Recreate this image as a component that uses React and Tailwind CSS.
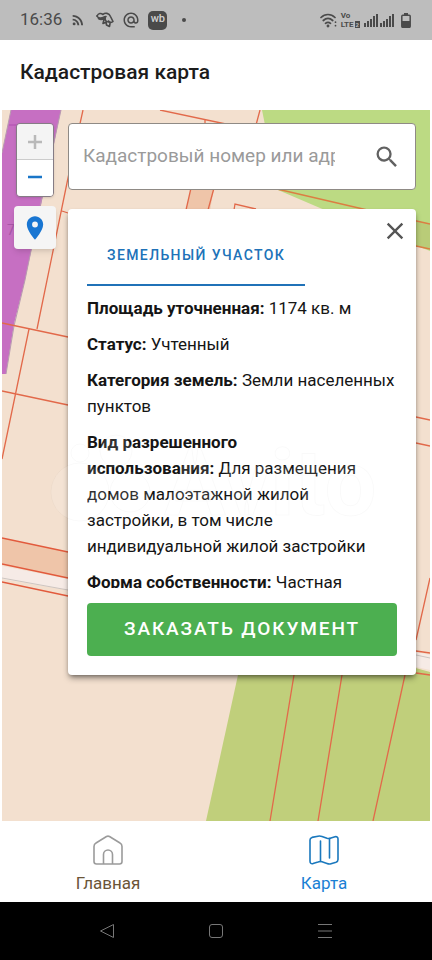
import { MdSearch, MdLocationOn, MdClose, MdRssFeed, MdAlternateEmail } from "react-icons/md";

const details = [
    { label: "Площадь уточненная:", value: "1174 кв. м" },
    { label: "Статус:", value: "Учтенный" },
    { label: "Категория земель:", value: "Земли населенных пунктов" },
    {
        label: "Вид разрешенного\nиспользования:",
        value: "Для размещения домов малоэтажной жилой застройки, в том числе индивидуальной жилой застройки",
    },
    { label: "Форма собственности:", value: "Частная" },
];

function SignalBars() {
    return (
        <svg viewBox="0 0 14 13" className="h-[13px] w-3.5" fill="currentColor" aria-hidden="true">
            <rect x="0" y="9" width="2" height="4" />
            <rect x="3" y="7" width="2" height="6" />
            <rect x="6" y="5" width="2" height="8" />
            <rect x="9" y="2" width="2" height="11" />
            <rect x="12" y="0" width="2" height="13" />
        </svg>
    );
}

function StatusBar() {
    return (
        <div className="flex h-10 items-center justify-between bg-[#bdbdbd] pl-5 pr-[21px] text-[#4a4a4a]">
            <div className="flex items-center">
                <span className="text-[17px]">16:36</span>
                <MdRssFeed className="ml-2 size-4" />
                {/* bird */}
                <svg viewBox="0 0 18 16" className="ml-2.5 h-4 w-[18px]" fill="none" stroke="currentColor" strokeWidth="1.6" strokeLinecap="round" strokeLinejoin="round" aria-hidden="true">
                    <path d="M1 4C2.500 1 5 1 7 2.500 9 .5 13 .8 14.500 4.500L17 9.500C15.500 11 13.500 10.500 12.500 9" />
                    <path d="M1 4c1 2 3 2.500 5 1.800 1-.3 2-1.300 4-1.300M2.500 6.500c2 1.500 4 1 6 0M9.500 5c-1 3 .5 5 3 5M8 7.500 7 11.500l2.500-1M10 10l.5 3 3 1.500.5-3" />
                </svg>
                <MdAlternateEmail className="ml-2 size-[18px]" />
                <span className="ml-2 flex h-[19px] w-[19px] items-center justify-center rounded-[5px] bg-[#4a4a4a] pb-px text-[11px] font-medium text-[#d0d0d0]">wb</span>
                <span className="ml-[15px] size-1 rounded-full bg-[#4a4a4a]" />
            </div>
            <div className="flex items-center">
                <svg viewBox="0 0 18 15" className="h-[15px] w-[18px]" fill="none" stroke="currentColor" strokeWidth="1.7" strokeLinecap="round" aria-hidden="true">
                    <path d="M1 4.500C5 .5 11 .5 15 4.500M3.300 7.500c3-2.600 6.400-2.600 9.400 0M5.500 10.300c1.600-1.300 3.400-1.300 5 0" />
                    <circle cx="8" cy="13" r=".6" fill="currentColor" />
                    <path d="M15.500 9v.2M15.500 12.500v.2" />
                </svg>
                <span className="ml-[3px] flex flex-col text-[8px] font-bold leading-[9px]">
                    <span>Vo</span>
                    <span className="flex items-center">
                        LTE<span className="ml-px bg-[#4a4a4a] px-px text-[6px] leading-[7px] text-[#bdbdbd]">2</span>
                    </span>
                </span>
                <span className="ml-1 flex gap-0.5">
                    <SignalBars />
                    <SignalBars />
                </span>
                <svg viewBox="0 0 10 15" className="ml-[7px] h-[15px] w-2.5" fill="none" stroke="currentColor" aria-hidden="true">
                    <path d="M3 0h4v2H3z" fill="currentColor" stroke="none" />
                    <rect x=".8" y="2.300" width="8.400" height="12" rx="1" strokeWidth="1.500" />
                    <path d="M1 8h8v6H1z" fill="currentColor" stroke="none" />
                </svg>
            </div>
        </div>
    );
}

// Parcels layer: one unit is one pixel at the base width
function ParcelMap() {
    return (
        <svg viewBox="2 110 428 711" preserveAspectRatio="xMidYMid slice" className="col-start-1 row-start-1 h-full w-full" aria-hidden="true">
            <rect x="2" y="110" width="428" height="711" fill="#f3e0cf" />
            {/* zones */}
            <path d="M2 110H61L43 196 25 280 14 324 6 374H2z" fill="#c66fc2" />
            <path d="M2 110h9L2 153z" fill="#f3e0cf" />
            <path d="M11 110 2 153M61 110 42 197 25 280 14 326 6 374" fill="none" stroke="#b79bb0" />
            <path d="M9 125h8" stroke="#b04fb0" />
            <text x="7" y="235" fontSize="14" fill="#a856a8">7</text>
            <path d="M262 110H430V251L320 208 278 190z" fill="#bcda83" />
            <path d="M416 221 430 224V249L416 246z" fill="#b9cc78" />
            <path d="M238 675 250 622 430 672V821H206z" fill="#c0cf7b" />
            <path d="M191 188h23l-4 22h-24zM2 538l66 14v26L2 564z" fill="#efc5a9" />
            <path d="M2 566 68 579 430 655V670L68 590 2 579z" fill="#f6ebe6" />
            <path d="M2 578 68 590M416 655l14 3" stroke="#cdc5c0" fill="none" />
            {/* parcel borders */}
            <g fill="none" stroke="#e2694a" strokeWidth="1.300">
                <path d="M83 110 68 178 37 329M62 211l6 2" />
                <path d="M2 323 68 337M29 329 2 459M2 391 68 405" />
                <path d="M2 538 68 552M2 564 68 578M2 582 68 596" stroke="#e25a3c" />
                <path d="M160 110 240 127M205 119v5M260 110 256 125" />
                <path d="M191 188 186 210M214 188 208 210M234 210l1-6 21 5" />
                <path d="M277 189 363 209 430 224M416 246l14 3" stroke="#dc7d42" />
                <path d="M416 417l14 3M416 443l14 3" />
                <path d="M430 578 416 640M416 651l14 2M416 673l14 2" />
                <path d="M294 675 270 821M342 675 318 821M405 675 373 821" />
            </g>
        </svg>
    );
}

function Watermark() {
    return (
        <svg viewBox="2 110 428 711" preserveAspectRatio="xMidYMid slice" className="pointer-events-none absolute inset-0 h-full w-full" fill="#ffffff" fillOpacity=".12" stroke="#000000" strokeOpacity=".025" aria-hidden="true">
            <circle cx="80" cy="453" r="9" />
            <circle cx="116" cy="451" r="16" />
            <circle cx="80" cy="492" r="29" />
            <circle cx="130" cy="492" r="20" />
            <text x="164" y="515" fontSize="92" fontWeight="700">Avito</text>
        </svg>
    );
}

function MapControls() {
    return (
        <div className="flex w-[42px] shrink-0 flex-col items-center gap-[9px]">
            <div className="flex w-[38px] flex-col overflow-hidden rounded-sm border border-[#857c85] shadow">
                <button type="button" aria-label="+" className="flex h-9 items-center justify-center border-b border-[#ccc] bg-[#f4f4f4] text-[#b9b9b9]">
                    <svg viewBox="0 0 14 14" className="size-3.5" stroke="currentColor" strokeWidth="2.500"><path d="M7 0v14M0 7h14" /></svg>
                </button>
                <button type="button" aria-label="−" className="flex h-9 items-center justify-center bg-white pb-0.5 text-[#1976c8]">
                    <svg viewBox="0 0 14 14" className="size-3.5" stroke="currentColor" strokeWidth="2.500"><path d="M0 7h14" /></svg>
                </button>
            </div>
            <button type="button" aria-label="Карта" className="flex h-[43px] w-[42px] items-center justify-center rounded bg-[#f5f5f5] text-[#1976d2] shadow-md">
                <MdLocationOn className="size-7" />
            </button>
        </div>
    );
}

function ParcelCard() {
    return (
        <section className="rounded bg-white px-[19px] pb-[19px] shadow-md shadow-black/40">
            <div className="-mr-3 flex items-start justify-between">
                <button type="button" className="mt-6 h-[53px] border-b-2 border-[#2072b8] px-5 pb-1.5 text-[14px] font-medium tracking-widest text-[#2072b8]">
                    ЗЕМЕЛЬНЫЙ УЧАСТОК
                </button>
                <button type="button" aria-label="×" className="mt-2 text-[#555]">
                    <MdClose className="size-7" />
                </button>
            </div>
            <div className="flex max-h-[302px] flex-col gap-2.5 overflow-y-auto pt-[9px] text-[17px] leading-[26px] text-[#151515] [scrollbar-width:none]">
                {details.map((item) => (
                    <p key={item.label} className="whitespace-pre-line">
                        <b className="font-bold">{item.label}</b> {item.value}
                    </p>
                ))}
            </div>
            <button type="button" className="mt-[15px] h-[53px] w-full rounded-sm bg-[#4caf50] text-[19px] font-medium tracking-widest text-white">
                ЗАКАЗАТЬ ДОКУМЕНТ
            </button>
        </section>
    );
}

function TabBar() {
    return (
        <nav className="flex h-[81px] bg-white text-[17px]">
            <a href="#home" className="flex flex-1 flex-col items-center gap-1.5 pt-3.5 text-[#6b5538]">
                <svg viewBox="0 0 30 30" className="size-[30px]" fill="none" stroke="#9b9b9b" strokeWidth="1.600" strokeLinejoin="round" aria-hidden="true">
                    <path d="M1 11.500Q1 9 3 8L13.500 1.500Q15 .7 16.500 1.500L27 8Q29 9 29 11.500V26.500Q29 29 26.500 29H3.500Q1 29 1 26.500z" />
                    <path d="M10.500 29V19.500a4.500 4.500 0 0 1 9 0V29" />
                </svg>
                Главная
            </a>
            <a href="#map" className="flex flex-1 flex-col items-center gap-1.5 pt-3.5 text-[#1a7fd4]">
                <svg viewBox="0 0 30 30" className="size-[30px]" fill="none" stroke="#1a78bd" strokeWidth="1.600" strokeLinecap="round" strokeLinejoin="round" aria-hidden="true">
                    <path d="M1 5Q1 3 3 2.400L9 1.200Q11 .8 13 1.500L18 3.200Q20 3.800 22 3L26 1.700Q29 1.200 29 4V24.500Q29 26.500 27 27.200L22 28.800Q20 29.400 18 28.500L13 26.800Q11 26.200 9 27L4 28.600Q1 29.200 1 26z" />
                    <path d="M11.500 6V26.500M20.500 3.500V23" />
                </svg>
                Карта
            </a>
        </nav>
    );
}

function SystemNav() {
    return (
        <div className="flex h-[58px] items-center justify-around bg-black px-[52px] text-[#777]">
            <button type="button" aria-label="◁">
                <svg viewBox="0 0 16 16" className="size-4" fill="none" stroke="currentColor" strokeLinejoin="round"><path d="M14.500 1.500v13L1.500 8z" /></svg>
            </button>
            <button type="button" aria-label="□">
                <svg viewBox="0 0 16 16" className="size-4" fill="none" stroke="currentColor"><rect x="1.500" y="1.500" width="13" height="13" rx="2.500" /></svg>
            </button>
            <button type="button" aria-label="≡">
                <svg viewBox="0 0 16 16" className="size-4" fill="none" stroke="currentColor"><path d="M1 1.500h14M1 8h14M1 14.500h14" /></svg>
            </button>
        </div>
    );
}

export default function App() {
    return (
        <div className="flex min-h-screen flex-col bg-white font-[Roboto,sans-serif]">
            <StatusBar />
            <header className="flex h-[70px] items-center px-5 pb-1">
                <h1 className="text-[21px] font-medium text-[#1c1c1c]">Кадастровая карта</h1>
            </header>
            <main className="relative mx-0.5 grid flex-1 overflow-hidden">
                <ParcelMap />
                <div className="relative col-start-1 row-start-1 flex items-start gap-3 pb-5 pl-3 pr-3.5 pt-[13px]">
                    <MapControls />
                    <div className="flex min-w-0 flex-1 flex-col gap-[19px]">
                        <label className="flex h-[67px] items-center justify-between rounded border border-[#8f8a85] bg-white pl-3.5 pr-3.5">
                            <input
                                type="text"
                                aria-label="Кадастровый номер или адрес"
                                placeholder="Кадастровый номер или адрес"
                                className="w-[252px] min-w-0 text-[19px] outline-none placeholder:text-[#9a9a9a]"
                            />
                            <MdSearch className="size-7 text-[#616161]" />
                        </label>
                        <ParcelCard />
                    </div>
                </div>
                <Watermark />
            </main>
            <TabBar />
            <SystemNav />
        </div>
    );
}
